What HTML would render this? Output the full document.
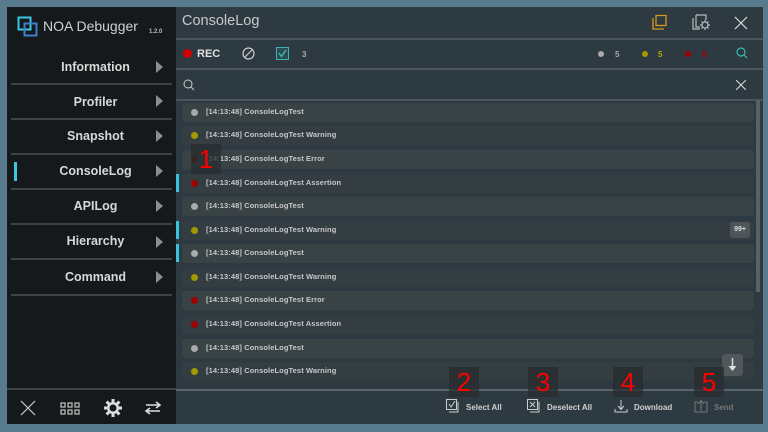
<!DOCTYPE html>
<html><head><meta charset="utf-8"><style>
*{margin:0;padding:0;box-sizing:border-box}
body{width:768px;height:432px;background:#577a8c;position:relative;overflow:hidden;font-family:"Liberation Sans",sans-serif}
.a{position:absolute}
#side{left:7px;top:7px;width:169px;height:417px;background:#15191b}
#main{left:176px;top:7px;width:587px;height:417px;background:#2e3a41}
.mi{position:absolute;left:0;width:169px;padding-left:8px;text-align:center;color:#d8d8d8;font-weight:bold;font-size:12.5px}
.tri{position:absolute;left:149px;width:0;height:0;border-top:6px solid transparent;border-bottom:6px solid transparent;border-left:7px solid #8a8e90}
.sep{position:absolute;left:4px;width:161px;height:2px;background:#3e4345}
.row{position:absolute;left:182px;width:572px;height:19px;border-radius:3px}
.row span{position:absolute;left:24px;top:4px;font-size:7.5px;font-weight:bold;color:#c8c8c8;letter-spacing:.1px}
.dot{position:absolute;left:9px;top:6px;width:7px;height:7px;border-radius:50%;display:block}
.mark{position:absolute;left:176px;width:3px;height:18px;background:#39c2da}
.num{position:absolute;width:30px;height:30px;background:rgba(40,44,46,.75);color:#f00;font-size:26px;text-align:center;line-height:30px}
.bt{position:absolute;top:403px;font-size:8px;font-weight:bold;color:#d0d0d0}
.hl{position:absolute;left:176px;width:587px;height:2px;background:#4a555b}
</style></head><body>
<div class="a" id="side"></div>
<div class="a" id="main"></div>
<svg class="a" style="left:17px;top:16px" width="22" height="22"><rect x="1.5" y="1.5" width="12" height="12" fill="none" stroke="#3cc7e0" stroke-width="2"/><rect x="7.5" y="7.5" width="12" height="12" fill="none" stroke="#3a7fd0" stroke-width="2"/></svg>
<div class="a" style="left:43px;top:18px;color:#d0d0d0;font-size:14px">NOA Debugger</div>
<div class="a" style="left:149px;top:29px;color:#bbb;font-size:6px;font-weight:bold">1.2.0</div>
<div class="mi" style="left:7px;top:60px">Information</div><div class="tri" style="left:156px;top:61px"></div>
<div class="sep" style="left:11px;top:83px"></div>
<div class="mi" style="left:7px;top:95px">Profiler</div><div class="tri" style="left:156px;top:95px"></div>
<div class="sep" style="left:11px;top:118px"></div>
<div class="mi" style="left:7px;top:129px">Snapshot</div><div class="tri" style="left:156px;top:130px"></div>
<div class="sep" style="left:11px;top:153px"></div>
<div class="a" style="left:14px;top:162px;width:3px;height:19px;background:#3cc7e0"></div>
<div class="mi" style="left:7px;top:164px">ConsoleLog</div><div class="tri" style="left:156px;top:165px"></div>
<div class="sep" style="left:11px;top:188px"></div>
<div class="mi" style="left:7px;top:199px">APILog</div><div class="tri" style="left:156px;top:200px"></div>
<div class="sep" style="left:11px;top:223px"></div>
<div class="mi" style="left:7px;top:234px">Hierarchy</div><div class="tri" style="left:156px;top:236px"></div>
<div class="sep" style="left:11px;top:258px"></div>
<div class="mi" style="left:7px;top:270px">Command</div><div class="tri" style="left:156px;top:271px"></div>
<div class="sep" style="left:11px;top:294px"></div>
<div class="a" style="left:7px;top:388px;width:169px;height:2px;background:#3e4345"></div>
<svg class="a" style="left:20px;top:400px" width="16" height="16"><path d="M1 1L15 15M15 1L1 15" stroke="#ccc" stroke-width="1.2"/></svg>
<svg class="a" style="left:60px;top:402px" width="20" height="13" fill="none" stroke="#bbb" stroke-width="1.3"><rect x="1" y="1" width="4" height="4"/><rect x="8" y="1" width="4" height="4"/><rect x="15" y="1" width="4" height="4"/><rect x="1" y="8" width="4" height="4"/><rect x="8" y="8" width="4" height="4"/><rect x="15" y="8" width="4" height="4"/></svg>
<svg class="a" style="left:103px;top:398px" width="20" height="20"><g stroke="#ddd" stroke-width="3"><path d="M10 1V19M1 10H19M3.6 3.6L16.4 16.4M16.4 3.6L3.6 16.4"/></g><circle cx="10" cy="10" r="6" fill="#ddd"/><circle cx="10" cy="10" r="3.5" fill="#15191b"/></svg>
<svg class="a" style="left:144px;top:401px" width="18" height="14" fill="none" stroke="#ddd" stroke-width="1.6"><path d="M2 4H15M12 1L16 4L12 7" /><path d="M16 10H3M6 7L2 10L6 13"/></svg>
<div class="a" style="left:182px;top:13px;color:#c8c8c8;font-size:14.5px">ConsoleLog</div>
<svg class="a" style="left:652px;top:14px" width="16" height="17" fill="none" stroke="#d39a1a" stroke-width="1.3"><rect x="4" y="1.5" width="10" height="10"/><path d="M1 4V15H12"/></svg>
<svg class="a" style="left:692px;top:14px" width="18" height="17" fill="none" stroke="#bbb" stroke-width="1.2"><path d="M4 1H14V6M1 4V15H8"/><path d="M4 1V13H8"/><circle cx="13" cy="11" r="3"/><path d="M13 6V8M13 14V16M8 11H10M16 11H18M9.5 7.5L11 9M15 13L16.5 14.5M16.5 7.5L15 9M11 13L9.5 14.5"/></svg>
<svg class="a" style="left:734px;top:16px" width="14" height="14"><path d="M1 1L13 13M13 1L1 13" stroke="#ddd" stroke-width="1.2"/></svg>
<div class="hl" style="top:38px"></div>
<div class="a" style="left:183px;top:49px;width:9px;height:9px;border-radius:50%;background:#d40000"></div>
<div class="a" style="left:197px;top:48px;color:#e0e0e0;font-size:11px;font-weight:bold">REC</div>
<svg class="a" style="left:242px;top:47px" width="13" height="13" fill="none" stroke="#ccc" stroke-width="1.2"><circle cx="6.5" cy="6.5" r="5.5"/><path d="M2.5 10.5L10.5 2.5"/></svg>
<svg class="a" style="left:276px;top:47px" width="13" height="13"><rect x=".5" y=".5" width="12" height="12" fill="#2b4d52" stroke="#3ab5b0"/><path d="M3 6L5.5 9.5L10 3" fill="none" stroke="#3cc7c0" stroke-width="1.2"/></svg>
<div class="a" style="left:302px;top:50px;color:#aaa;font-size:8px;font-weight:bold">3</div>
<div class="a" style="left:598px;top:51px;width:6px;height:6px;border-radius:50%;background:#aaa"></div>
<div class="a" style="left:615px;top:50px;color:#aaa;font-size:8px;font-weight:bold">5</div>
<div class="a" style="left:642px;top:51px;width:6px;height:6px;border-radius:50%;background:#a09a00"></div>
<div class="a" style="left:658px;top:50px;color:#b0a800;font-size:8px;font-weight:bold">5</div>
<div class="a" style="left:685px;top:51px;width:6px;height:6px;border-radius:50%;background:#a00000"></div>
<div class="a" style="left:702px;top:50px;color:#a00000;font-size:8px;font-weight:bold">8</div>
<svg class="a" style="left:736px;top:47px" width="12" height="12" fill="none" stroke="#35bdb5" stroke-width="1.2"><circle cx="5" cy="5" r="4"/><path d="M8 8L11 11"/></svg>
<div class="hl" style="top:68px"></div>
<svg class="a" style="left:183px;top:79px" width="12" height="12" fill="none" stroke="#ccc" stroke-width="1"><circle cx="5" cy="5" r="4"/><path d="M8 8L11 11"/></svg>
<svg class="a" style="left:736px;top:80px" width="10" height="10"><path d="M0 0L10 10M10 0L0 10" stroke="#ddd" stroke-width="1"/></svg>
<div class="hl" style="top:99px"></div>
<div class="row" style="top:103px;background:#394245"><i class="dot" style="background:#aaa"></i><span>[14:13:48] ConsoleLogTest</span></div>
<div class="row" style="top:126px;background:#333d42"><i class="dot" style="background:#a09a00"></i><span>[14:13:48] ConsoleLogTest Warning</span></div>
<div class="row" style="top:150px;background:#394245"><i class="dot" style="background:#5a1515"></i><span>[14:13:48] ConsoleLogTest Error</span></div>
<div class="row" style="top:174px;background:#333d42"><i class="dot" style="background:#a00000"></i><span>[14:13:48] ConsoleLogTest Assertion</span></div>
<div class="row" style="top:197px;background:#394245"><i class="dot" style="background:#aaa"></i><span>[14:13:48] ConsoleLogTest</span></div>
<div class="row" style="top:221px;background:#333d42"><i class="dot" style="background:#a09a00"></i><span>[14:13:48] ConsoleLogTest Warning</span></div>
<div class="row" style="top:244px;background:#394245"><i class="dot" style="background:#aaa"></i><span>[14:13:48] ConsoleLogTest</span></div>
<div class="row" style="top:268px;background:#333d42"><i class="dot" style="background:#a09a00"></i><span>[14:13:48] ConsoleLogTest Warning</span></div>
<div class="row" style="top:291px;background:#394245"><i class="dot" style="background:#a00000"></i><span>[14:13:48] ConsoleLogTest Error</span></div>
<div class="row" style="top:315px;background:#333d42"><i class="dot" style="background:#a00000"></i><span>[14:13:48] ConsoleLogTest Assertion</span></div>
<div class="row" style="top:339px;background:#394245"><i class="dot" style="background:#aaa"></i><span>[14:13:48] ConsoleLogTest</span></div>
<div class="row" style="top:362px;background:#333d42"><i class="dot" style="background:#a09a00"></i><span>[14:13:48] ConsoleLogTest Warning</span></div>
<div class="mark" style="top:174px"></div>
<div class="mark" style="top:221px"></div>
<div class="mark" style="top:244px"></div>
<div class="a" style="left:730px;top:222px;width:20px;height:16px;border-radius:3px;background:#4d5558;color:#ddd;font-size:7px;font-weight:bold;text-align:center;line-height:16px">99+</div>
<div class="a" style="left:756px;top:100px;width:4px;height:192px;background:#5a6165"></div>
<div class="a" style="left:722px;top:354px;width:21px;height:22px;border-radius:3px;background:#50585b"></div>
<svg class="a" style="left:727px;top:357px" width="11" height="16"><path d="M5.5 1V13" stroke="#ddd" stroke-width="1.5"/><path d="M1.5 9L5.5 14L9.5 9Z" fill="#ddd"/></svg>
<div class="hl" style="top:389px;background:#5a656b"></div>
<svg class="a" style="left:446px;top:399px" width="14" height="14" fill="none" stroke="#ccc" stroke-width="1"><rect x=".5" y=".5" width="10" height="10"/><path d="M3 5L5 8L9 2M12 3V13H3"/></svg>
<div class="bt" style="left:466px">Select All</div>
<svg class="a" style="left:527px;top:399px" width="14" height="14" fill="none" stroke="#ccc" stroke-width="1"><rect x=".5" y=".5" width="10" height="10"/><path d="M3 3L8 8M8 3L3 8M12 3V13H3"/></svg>
<div class="bt" style="left:547px">Deselect All</div>
<svg class="a" style="left:614px;top:399px" width="14" height="14" fill="none" stroke="#ccc" stroke-width="1"><path d="M7 1V10M4 7L7 10.5L10 7M1 10V13H13V10"/></svg>
<div class="bt" style="left:634px">Download</div>
<svg class="a" style="left:694px;top:399px" width="14" height="14" fill="none" stroke="#777" stroke-width="1"><path d="M7 12V2M4 5L7 1.5L10 5M4 3H1V13H13V3H10"/></svg>
<div class="bt" style="left:714px;color:#777">Send</div>
<div class="num" style="left:191px;top:144px">1</div>
<div class="num" style="left:449px;top:367px">2</div>
<div class="num" style="left:528px;top:367px">3</div>
<div class="num" style="left:613px;top:367px">4</div>
<div class="num" style="left:694px;top:367px">5</div>
</body></html>
